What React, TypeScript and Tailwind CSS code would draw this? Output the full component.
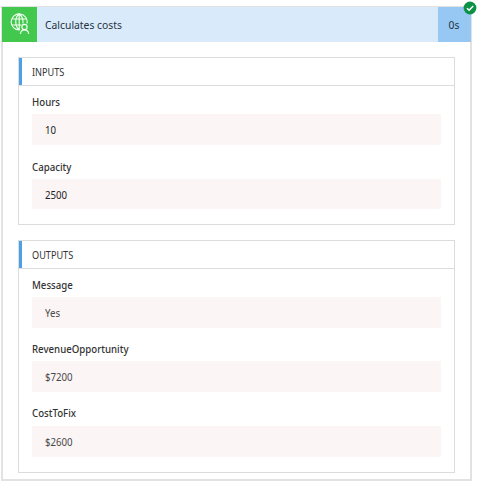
import React from 'react';

type FieldProps = {
  label: string;
  value: string;
  valueClass?: string;
  boxClass?: string;
};

function Field({ label, value, valueClass = 'text-[#333]', boxClass = 'h-[31px]' }: FieldProps) {
  return (
    <div>
      <div className="flex h-5 items-center">
        <span className="origin-left scale-x-[0.92] text-[10.5px] font-medium leading-none text-[#333]">{label}</span>
      </div>
      <div className={`mt-[2px] flex items-center bg-[#fbf5f5] pl-[12.5px] ${boxClass}`}>
        <span className={`origin-left scale-x-[0.92] text-[10.5px] leading-none ${valueClass}`}>{value}</span>
      </div>
    </div>
  );
}

function SectionTitle({ children }: { children: React.ReactNode }) {
  return (
    <div className="flex h-[27px] items-center border-l-[3px] border-[#4ba0e8] pl-[10px] pt-px">
      <span className="origin-left scale-x-[0.87] text-[10.5px] leading-none text-[#333]">{children}</span>
    </div>
  );
}

function FlowIcon() {
  return (
    <svg width="22" height="22" viewBox="0 0 22 22" fill="none" stroke="#f4fff4" strokeWidth="1.15">
      <path d="M10.5 16.9A8 8 0 1 1 18 10.5" />
      <path d="M10.5 16.9C5.6 14 5.6 4 10.2 1C13 3 14.3 6.5 14 10.5M10.2 1v16M2.9 6h14.6M2.9 12h9.6" />
      <circle cx="15.5" cy="14" r="2.6" />
      <path d="M11.4 21C11.6 18.2 13.3 16.8 15.5 16.8s4 1.4 4.2 4.2" />
    </svg>
  );
}

export default function App() {
  return (
    <div className="h-[482px] w-[480px] overflow-hidden bg-white pl-px pt-[6px] font-['Noto_Sans','Open_Sans',sans-serif]">
      <div className="relative h-[475px] w-[471px] border-2 border-t border-[#e2e2e2]">
        <header className="-mr-px flex h-[35px] bg-[#d9ebfb]">
          <div className="-ml-px flex w-[35px] justify-center bg-[#42c84c] pt-[6px]">
            <FlowIcon />
          </div>
          <div className="flex flex-1 items-center pl-[8px]">
            <span className="origin-left scale-x-[0.9] text-[11.5px] leading-none text-[#26323d]">Calculates costs</span>
          </div>
          <div className="flex w-[33px] items-center justify-center bg-[#96c8f3]">
            <span className="scale-x-[0.9] text-[11.5px] leading-none text-[#26323d]">0s</span>
          </div>
        </header>
        <svg className="absolute -top-[6px] right-[-7px]" width="14" height="14" viewBox="0 0 14 14">
          <circle cx="7" cy="7" r="6.4" fill="#0c9146" />
          <path d="M4 7.2l2.1 2.1L10.2 5" fill="none" stroke="white" strokeWidth="1.5" />
        </svg>
        <main className="flex flex-col gap-[15px] pl-[15px] pt-[15px]">
          <section className="h-[168px] w-[437px] border border-[#dcdcdc]">
            <SectionTitle>INPUTS</SectionTitle>
            <div className="flex flex-col gap-[12px] border-t border-[#dcdcdc] pl-[13px] pr-[13px] pt-[6px]">
              <Field label="Hours" value="10" valueClass="pt-px text-[#222]" />
              <Field label="Capacity" value="2500" boxClass="h-[30px]" valueClass="pt-[2px] text-[#222]" />
            </div>
          </section>
          <section className="h-[233px] w-[437px] border border-[#dcdcdc]">
            <SectionTitle>OUTPUTS</SectionTitle>
            <div className="flex flex-col gap-[11px] border-t border-[#dcdcdc] pl-[13px] pr-[13px] pt-[6px]">
              <Field label="Message" value="Yes" valueClass="pt-[2px] text-[#484848]" />
              <Field label="RevenueOpportunity" value="$7200" valueClass="pt-[2px] text-[#484848]" />
              <Field label="CostToFix" value="$2600" boxClass="mt-[3px] h-[31px]" valueClass="pt-[2px] text-[#484848]" />
            </div>
          </section>
        </main>
      </div>
    </div>
  );
}
